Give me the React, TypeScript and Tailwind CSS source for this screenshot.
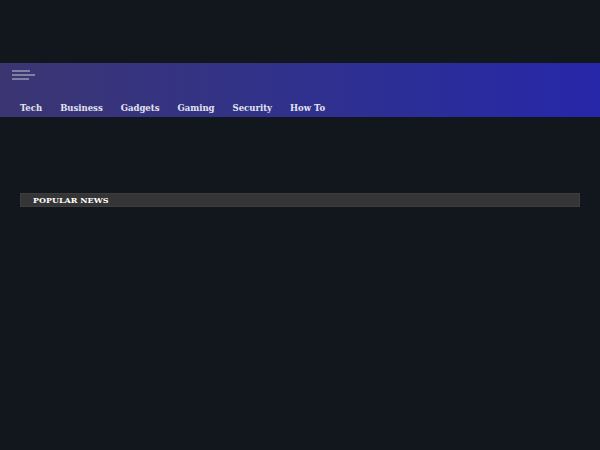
const navItems = ["Tech", "Business", "Gadgets", "Gaming", "Security", "How To"];

const Menu = () => (
  <svg width="24" height="10" viewBox="0 0 24 10" className="block">
    <line x1="0" y1="1" x2="18" y2="1" stroke="#c9c9d6" strokeWidth="1" />
    <line x1="0" y1="5" x2="23" y2="5" stroke="#c9c9d6" strokeWidth="1" />
    <line x1="0" y1="9" x2="17" y2="9" stroke="#c9c9d6" strokeWidth="1" />
  </svg>
);

export default function App() {
  return (
    <div className="w-[600px] h-[450px] bg-[#12171e] overflow-hidden font-['DejaVu_Serif',serif]">
      <div className="h-[63px]" />
      <header className="h-[54px] bg-gradient-to-r from-[#3b3571] to-[#2626a9] flex flex-col">
        <div className="h-[25px] pl-3 pt-[6.5px]">
          <Menu />
        </div>
        <nav className="flex gap-[18px] pl-5 pt-[16px]">
          {navItems.map((item) => (
            <a key={item} className="text-[8.5px] font-bold text-[#e4e4ee] leading-none">
              {item}
            </a>
          ))}
        </nav>
      </header>
      <div className="px-5 pt-[76px]">
        <div className="h-[14px] bg-[#353535] border border-[#3d3d3d] flex items-center pl-3">
          <span className="text-[8px] font-bold text-white leading-none uppercase">Popular News</span>
        </div>
      </div>
    </div>
  );
}
